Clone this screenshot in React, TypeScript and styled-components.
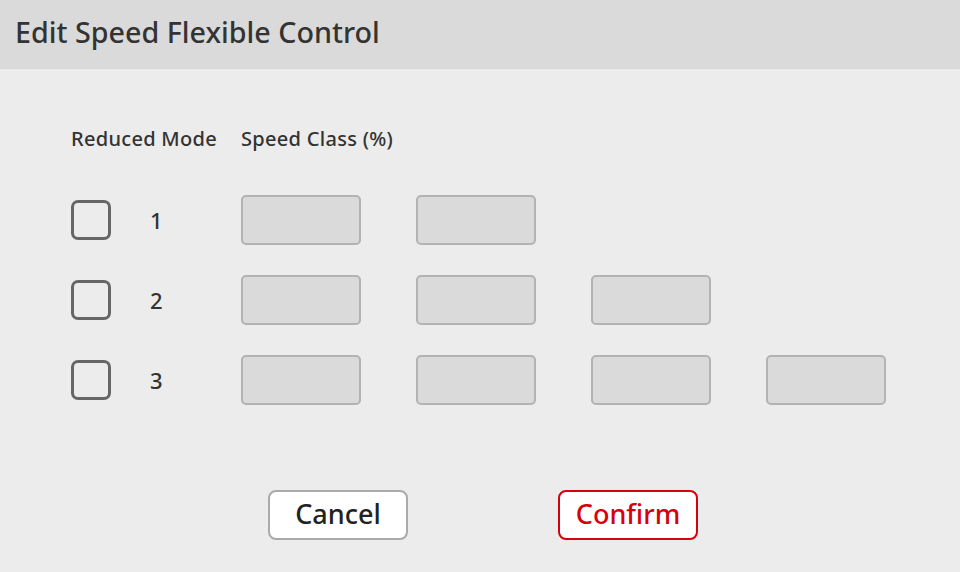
import styled, { createGlobalStyle } from "styled-components";

const GlobalStyle = createGlobalStyle`
  html, body {
    margin: 0;
    padding: 0;
    background: #ececec;
    font-family: "Noto Sans", "Open Sans", sans-serif;
  }
`;

const Dialog = styled.div`
  width: 960px;
  height: 572px;
  background: #ececec;
  display: flex;
  flex-direction: column;
`;

const Header = styled.div`
  height: 69px;
  background: #dadada;
  display: flex;
  align-items: center;
  padding-left: 15px;
`;

const Title = styled.h1`
  margin: 0 0 7px;
  font-size: 28.7px;
  font-weight: 500;
  color: #333;
`;

const Body = styled.div`
  padding: 55px 0 0 71px;
  display: flex;
  flex-direction: column;
`;

const HeadRow = styled.div`
  display: flex;
  height: 28px;
  align-items: center;
  margin-bottom: 43px;
`;

const HeadLabel = styled.div<{ $width?: number }>`
  width: ${(p) => (p.$width ? `${p.$width}px` : "auto")};
  font-size: 20px;
  font-weight: 500;
  letter-spacing: 0.3px;
  color: #333;
`;

const Rows = styled.div`
  display: flex;
  flex-direction: column;
  gap: 30px;
`;

const Row = styled.div`
  display: flex;
  align-items: center;
  height: 50px;
`;

const ModeCell = styled.div`
  width: 170px;
  display: flex;
  align-items: center;
`;

const Check = styled.div`
  width: 40px;
  height: 40px;
  box-sizing: border-box;
  border: 3px solid #666;
  border-radius: 7px;
`;

const Num = styled.span`
  margin-left: 39px;
  font-size: 22px;
  font-weight: 500;
  color: #333;
`;

const Inputs = styled.div`
  display: flex;
  gap: 55px;
`;

const Field = styled.div`
  width: 120px;
  height: 50px;
  box-sizing: border-box;
  background: #dadada;
  border: 2px solid #b3b3b3;
  border-radius: 5px;
`;

const Actions = styled.div`
  display: flex;
  gap: 150px;
  padding-left: 268px;
  margin-top: 85px;
`;

const Button = styled.button<{ $primary?: boolean }>`
  width: 140px;
  height: 50px;
  box-sizing: border-box;
  background: #fff;
  border: 2px solid ${(p) => (p.$primary ? "#d7000f" : "#aaa")};
  border-radius: 8px;
  color: ${(p) => (p.$primary ? "#d7000f" : "#222")};
  font-family: "Noto Sans", "Open Sans", sans-serif;
  font-size: 27px;
  font-weight: 500;
  padding: 0 0 3px;
  cursor: pointer;
`;

const rows = [2, 3, 4];

export default function App() {
  return (
    <>
      <GlobalStyle />
      <Dialog>
        <Header>
          <Title>Edit Speed Flexible Control</Title>
        </Header>
        <Body>
          <HeadRow>
            <HeadLabel $width={170}>Reduced Mode</HeadLabel>
            <HeadLabel>Speed Class (%)</HeadLabel>
          </HeadRow>
          <Rows>
            {rows.map((count, i) => (
              <Row key={i}>
                <ModeCell>
                  <Check />
                  <Num>{i + 1}</Num>
                </ModeCell>
                <Inputs>
                  {Array.from({ length: count }).map((_, j) => (
                    <Field key={j} />
                  ))}
                </Inputs>
              </Row>
            ))}
          </Rows>
        </Body>
        <Actions>
          <Button>Cancel</Button>
          <Button $primary>Confirm</Button>
        </Actions>
      </Dialog>
    </>
  );
}
